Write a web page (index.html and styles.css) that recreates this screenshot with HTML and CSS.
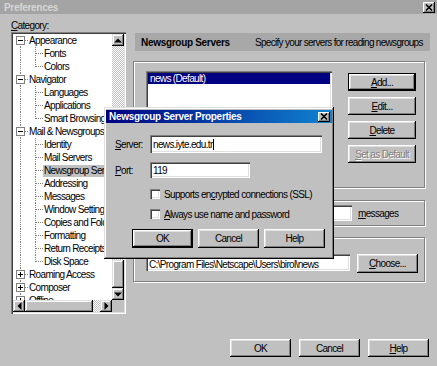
FILE: index.html
```html
<!DOCTYPE html>
<html>
<head>
    <meta charset="UTF-8">
    <title>Preferences</title>
    <link rel="stylesheet" href="styles.css">
</head>
<body>

<div class="window">
    <div class="titlebar">
        <span class="title">Preferences</span>
        <span class="closebtn"><svg width="8" height="7" viewBox="0 0 8 7"><path d="M1 0.5 L7 6.5 M7 0.5 L1 6.5" stroke="#000" stroke-width="1.6"/></svg></span>
    </div>

    <div class="main">
        <div class="left">
            <div class="cat-label"><u>C</u>ategory:</div>
            <div class="tree">
                <div class="tree-body">
                    <div class="rows">
                        <div class="row"><span class="cell node first"><i class="box"></i></span><span class="txt">Appearance</span></div>
                        <div class="row"><span class="cell pipe"></span><span class="cell tee"></span><span class="txt">Fonts</span></div>
                        <div class="row"><span class="cell pipe"></span><span class="cell end"></span><span class="txt">Colors</span></div>
                        <div class="row"><span class="cell node"><i class="box"></i></span><span class="txt">Navigator</span></div>
                        <div class="row"><span class="cell pipe"></span><span class="cell tee"></span><span class="txt">Languages</span></div>
                        <div class="row"><span class="cell pipe"></span><span class="cell tee"></span><span class="txt">Applications</span></div>
                        <div class="row"><span class="cell pipe"></span><span class="cell end"></span><span class="txt">Smart Browsing</span></div>
                        <div class="row"><span class="cell node"><i class="box"></i></span><span class="txt">Mail &amp; Newsgroups</span></div>
                        <div class="row"><span class="cell pipe"></span><span class="cell tee"></span><span class="txt">Identity</span></div>
                        <div class="row"><span class="cell pipe"></span><span class="cell tee"></span><span class="txt">Mail Servers</span></div>
                        <div class="row"><span class="cell pipe"></span><span class="cell tee"></span><span class="txt sel">Newsgroup Servers</span></div>
                        <div class="row"><span class="cell pipe"></span><span class="cell tee"></span><span class="txt">Addressing</span></div>
                        <div class="row"><span class="cell pipe"></span><span class="cell tee"></span><span class="txt">Messages</span></div>
                        <div class="row"><span class="cell pipe"></span><span class="cell tee"></span><span class="txt">Window Settings</span></div>
                        <div class="row"><span class="cell pipe"></span><span class="cell tee"></span><span class="txt">Copies and Folders</span></div>
                        <div class="row"><span class="cell pipe"></span><span class="cell tee"></span><span class="txt">Formatting</span></div>
                        <div class="row"><span class="cell pipe"></span><span class="cell tee"></span><span class="txt">Return Receipts</span></div>
                        <div class="row"><span class="cell pipe"></span><span class="cell end"></span><span class="txt">Disk Space</span></div>
                        <div class="row"><span class="cell node"><i class="box plus"></i></span><span class="txt">Roaming Access</span></div>
                        <div class="row"><span class="cell node"><i class="box plus"></i></span><span class="txt">Composer</span></div>
                        <div class="row"><span class="cell node"><i class="box plus"></i></span><span class="txt">Offline</span></div>
                    </div>
                    <div class="vscroll">
                        <span class="sbtn"><svg width="8" height="5" viewBox="0 0 8 5"><polygon points="0,4.5 4,0.5 8,4.5" fill="#000"/></svg></span>
                        <span class="track"></span>
                        <span class="thumb"></span>
                        <span class="sbtn"><svg width="8" height="5" viewBox="0 0 8 5"><polygon points="0,0.5 4,4.5 8,0.5" fill="#000"/></svg></span>
                    </div>
                </div>
                <div class="hscroll">
                    <span class="sbtn"><svg width="5" height="8" viewBox="0 0 5 8"><polygon points="4.5,0 0.5,4 4.5,8" fill="#000"/></svg></span>
                    <span class="hthumb"></span>
                    <span class="htrack"></span>
                    <span class="sbtn"><svg width="5" height="8" viewBox="0 0 5 8"><polygon points="0.5,0 4.5,4 0.5,8" fill="#000"/></svg></span>
                    <span class="corner"></span>
                </div>
            </div>
        </div>

        <div class="right">
            <div class="panel-head">
                <b class="head-title">Newsgroup Servers</b>
                <span class="head-desc">Specify your servers for reading newsgroups</span>
            </div>

            <div class="group g1">
                <div class="listbox">
                    <div class="item on">news (Default)</div>
                </div>
                <div class="side-btns">
                    <button class="btn default"><u>A</u>dd...</button>
                    <button class="btn"><u>E</u>dit...</button>
                    <button class="btn"><u>D</u>elete</button>
                    <button class="btn off"><u>S</u>et as Default</button>
                </div>
            </div>

            <div class="group g2">
                <span class="chk"></span>
                <span class="ask"></span>
                <div class="field num"></div>
                <span class="msgs"><u>m</u>essages</span>
            </div>

            <div class="group g3">
                <div class="dir-label"></div>
                <div class="dir-row">
                    <div class="field path">C:\Program Files\Netscape\Users\birol\news</div>
                    <button class="btn choose"><u>C</u>hoose...</button>
                </div>
            </div>
        </div>
    </div>

    <div class="footer">
        <button class="btn">OK</button>
        <button class="btn">Cancel</button>
        <button class="btn"><u>H</u>elp</button>
    </div>

    <!-- modal dialog over the preferences window -->
    <div class="dialog">
        <div class="dlg-title">
            <span>Newsgroup Server Properties</span>
            <span class="closebtn"><svg width="8" height="7" viewBox="0 0 8 7"><path d="M1 0.5 L7 6.5 M7 0.5 L1 6.5" stroke="#000" stroke-width="1.6"/></svg></span>
        </div>
        <div class="dlg-body">
            <div class="frow">
                <span class="flabel"><u>S</u>erver:</span>
                <div class="field server">news.iyte.edu.tr<i class="caret"></i></div>
            </div>
            <div class="frow port-row">
                <span class="flabel"><u>P</u>ort:</span>
                <div class="field port">119</div>
            </div>
            <div class="crow first">
                <span class="chk"></span>
                <span>Supports en<u>c</u>rypted connections (SSL)</span>
            </div>
            <div class="crow">
                <span class="chk"></span>
                <span><u>A</u>lways use name and password</span>
            </div>
            <div class="dlg-btns">
                <button class="btn default">OK</button>
                <button class="btn">Cancel</button>
                <button class="btn">Help</button>
            </div>
        </div>
    </div>
</div>

</body>
</html>
```

FILE: styles.css
```css
* {
    margin: 0;
    padding: 0;
    box-sizing: border-box;
}
body {
    background: #c0c0c0;
}
.window {
    width: 437px;
    height: 366px;
    position: relative;
    overflow: hidden;
    background: #c0c0c0;
    font: 10px "Liberation Sans", Arial, sans-serif;
    letter-spacing: -0.65px;
    color: #000;
}
u {
    text-decoration: underline;
    text-underline-offset: 1px;
}

/* title bar */
.titlebar {
    height: 14px;
    background: #a4a4a4;
    display: flex;
    align-items: center;
    justify-content: space-between;
    padding: 0 2px 0 4px;
}
.title {
    color: #d6d6d6;
    font-weight: bold;
    letter-spacing: -0.3px;
}
.closebtn {
    width: 12px;
    height: 11px;
    display: flex;
    align-items: center;
    justify-content: center;
    background: #c0c0c0;
    box-shadow: inset -1px -1px #000, inset 1px 1px #fff, inset -2px -2px #808080;
}

/* layout */
.main {
    display: grid;
    grid-template-columns: 115px 297px;
    column-gap: 7px;
    padding-left: 11px;
}
.cat-label {
    height: 18px;
    padding-top: 5px;
    line-height: 13px;
}

/* tree */
.tree {
    height: 282px;
    padding: 2px;
    background: #fff;
    box-shadow: inset 1px 1px #808080, inset 2px 2px #404040, inset -1px -1px #fff, inset -2px -2px #dfdfdf;
}
.tree-body {
    display: flex;
    height: 266px;
}
.rows {
    flex: 1;
    overflow: hidden;
}
.row {
    height: 13px;
    display: flex;
    align-items: center;
    white-space: nowrap;
}
.cell {
    flex: none;
    height: 13px;
    display: flex;
    align-items: center;
    background-repeat: no-repeat;
}
.cell.node, .cell.pipe {
    width: 16px;
}
.cell.tee, .cell.end {
    width: 15px;
}
.cell.node {
    background-image: repeating-linear-gradient(#808080 0 1px, transparent 1px 2px),
                      repeating-linear-gradient(90deg, #808080 0 1px, transparent 1px 2px);
    background-size: 1px 13px, 4px 1px;
    background-position: 7px 0, 12px 6px;
}
.cell.node.first {
    background-size: 1px 7px, 4px 1px;
    background-position: 7px 6px, 12px 6px;
}
.cell.pipe {
    background-image: repeating-linear-gradient(#808080 0 1px, transparent 1px 2px);
    background-size: 1px 13px;
    background-position: 7px 0;
}
.cell.tee, .cell.end {
    background-image: repeating-linear-gradient(#808080 0 1px, transparent 1px 2px),
                      repeating-linear-gradient(90deg, #808080 0 1px, transparent 1px 2px);
    background-size: 1px 13px, 7px 1px;
    background-position: 6px 0, 7px 6px;
}
.cell.end {
    background-size: 1px 7px, 7px 1px;
}
.box {
    width: 9px;
    height: 9px;
    margin-left: 3px;
    border: 1px solid #808080;
    background: linear-gradient(#000, #000) center / 5px 1px no-repeat, #fff;
}
.box.plus {
    background: linear-gradient(#000, #000) center / 5px 1px no-repeat,
                linear-gradient(#000, #000) center / 1px 5px no-repeat, #fff;
}
.txt {
    line-height: 12px;
    padding: 0 1px 0 0;
}
.txt.sel {
    background: #c0c0c0;
    margin-left: -1px;
    padding-left: 1px;
}

/* scrollbars */
.vscroll {
    width: 12px;
    display: flex;
    flex-direction: column;
}
.sbtn {
    flex: none;
    width: 12px;
    height: 12px;
    display: flex;
    align-items: center;
    justify-content: center;
    background: #c0c0c0;
    box-shadow: inset -1px -1px #000, inset 1px 1px #dfdfdf, inset -2px -2px #808080, inset 2px 2px #fff;
}
.track, .htrack {
    flex: 1;
    background: repeating-conic-gradient(#c0c0c0 0 25%, #fff 0 50%) 0 0 / 2px 2px;
}
.thumb {
    flex: none;
    height: 28px;
    background: #c0c0c0;
    box-shadow: inset -1px -1px #000, inset 1px 1px #dfdfdf, inset -2px -2px #808080, inset 2px 2px #fff;
}
.hscroll {
    display: flex;
    height: 12px;
}
.hthumb {
    flex: none;
    width: 68px;
    background: #c0c0c0;
    box-shadow: inset -1px -1px #000, inset 1px 1px #dfdfdf, inset -2px -2px #808080, inset 2px 2px #fff;
}
.htrack {
    flex: 1;
}
.corner {
    width: 12px;
    background: #c0c0c0;
}

/* right panel */
.panel-head {
    margin-top: 19px;
    margin-left: 2px;
    height: 18px;
    background: #a8a8a8;
    display: flex;
    align-items: center;
    padding-left: 6px;
    white-space: nowrap;
}
.head-title {
    width: 114px;
    letter-spacing: -0.3px;
}
.head-desc {
    letter-spacing: -0.7px;
}
.group {
    width: 292px;
    border: 1px solid #808080;
    box-shadow: inset 1px 1px #fff, 1px 1px #fff;
}
.g1 {
    margin-top: 10px;
    height: 127px;
    display: flex;
    padding: 9px 0 0 12px;
}
.listbox {
    width: 186px;
    height: 105px;
    padding: 2px;
    background: #fff;
    box-shadow: inset 1px 1px #808080, inset 2px 2px #404040, inset -1px -1px #fff, inset -2px -2px #dfdfdf;
}
.item {
    height: 11px;
    line-height: 11px;
    padding-left: 2px;
}
.item.on {
    background: #000080;
    color: #fff;
}
.side-btns {
    margin: 2px 0 0 16px;
    display: flex;
    flex-direction: column;
    gap: 6px;
}
.side-btns .btn {
    width: 68px;
}

.g2 {
    margin-top: 12px;
    height: 26px;
    display: flex;
    align-items: center;
    padding-left: 12px;
    white-space: nowrap;
}
.ask {
    width: 140px;
    margin-left: 4px;
}
.field {
    background: #fff;
    padding: 0 3px;
    display: flex;
    align-items: center;
    white-space: nowrap;
    overflow: hidden;
    box-shadow: inset 1px 1px #808080, inset 2px 2px #404040, inset -1px -1px #fff, inset -2px -2px #dfdfdf;
}
.num {
    width: 52px;
    height: 16px;
}
.msgs {
    margin-left: 6px;
}

.g3 {
    margin-top: 11px;
    height: 45px;
    padding: 4px 0 0 12px;
}
.dir-label {
    height: 11px;
}
.dir-row {
    margin-top: 1px;
    display: flex;
    align-items: flex-start;
}
.path {
    width: 204px;
    height: 17px;
    padding-top: 3px;
}
.choose {
    margin-left: 7px;
}

/* buttons */
.btn {
    width: 61px;
    height: 18px;
    border: none;
    background: #c0c0c0;
    font: inherit;
    letter-spacing: inherit;
    color: #000;
    display: flex;
    align-items: center;
    justify-content: center;
    box-shadow: inset -1px -1px #000, inset 1px 1px #fff, inset -2px -2px #808080, inset 2px 2px #dfdfdf;
}
.btn.default {
    box-shadow: inset 0 0 0 1px #000, inset -2px -2px #000, inset 2px 2px #fff, inset -3px -3px #808080, inset 3px 3px #dfdfdf;
}
.btn.off {
    color: #808080;
    text-shadow: 1px 1px #fff;
}
.choose {
    height: 19px;
}

.footer {
    margin-top: 25px;
    display: flex;
    justify-content: flex-end;
    gap: 8px;
    padding-right: 8px;
}

/* dialog */
.dialog {
    position: absolute;
    left: 104px;
    top: 107px;
    width: 230px;
    height: 152px;
    background: #c0c0c0;
    padding: 3px 2px 2px;
    box-shadow: inset -1px -1px #000, inset 1px 1px #dfdfdf, inset -2px -2px #808080, inset 2px 2px #fff;
}
.dlg-title {
    height: 13px;
    background: linear-gradient(90deg, #000080, #1084d0);
    color: #fff;
    font-weight: bold;
    letter-spacing: -0.3px;
    display: flex;
    align-items: center;
    justify-content: space-between;
    padding: 0 2px 0 3px;
}
.dlg-title .closebtn {
    height: 10px;
}
.dlg-body {
    padding: 12px 0 0 9px;
}
.frow {
    display: flex;
    align-items: center;
}
.flabel {
    width: 35px;
}
.server {
    width: 172px;
    height: 18px;
}
.caret {
    width: 1px;
    height: 11px;
    background: #000;
}
.port-row {
    margin-top: 9px;
}
.port {
    width: 100px;
    height: 16px;
}
.crow {
    margin: 10px 0 0 35px;
    height: 10px;
    display: flex;
    align-items: center;
    gap: 4px;
    white-space: nowrap;
}
.crow.first {
    margin-top: 11px;
}
.chk {
    flex: none;
    width: 10px;
    height: 10px;
    background: #fff;
    box-shadow: inset 1px 1px #808080, inset 2px 2px #404040, inset -1px -1px #fff, inset -2px -2px #dfdfdf;
}
.dlg-btns {
    margin: 10px 0 0 17px;
    display: flex;
    gap: 5px;
}
.dlg-btns .btn {
    height: 19px;
}
```
